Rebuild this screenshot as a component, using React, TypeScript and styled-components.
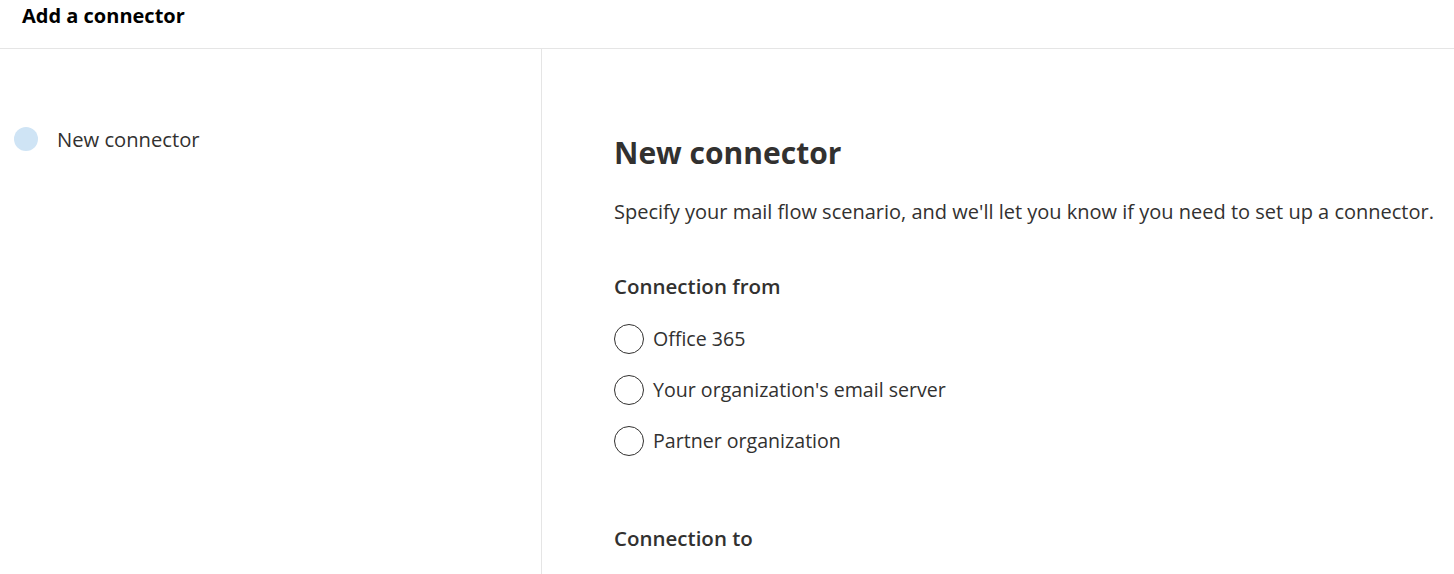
import React from 'react'
import styled, { createGlobalStyle } from 'styled-components'

const GlobalStyle = createGlobalStyle`
  html, body {
    margin: 0;
    padding: 0;
    background: #ffffff;
  }
  body {
    font-family: 'Open Sans', 'Noto Sans', 'Liberation Sans', sans-serif;
    color: #323130;
  }
`

const Page = styled.div`
  display: flex;
  flex-direction: column;
  height: 574px;
  overflow: hidden;
`

const Header = styled.header`
  height: 49px;
  box-sizing: border-box;
  border-bottom: 1px solid #e5e5e5;
  padding: 4px 0 0 22px;
`

const HeaderTitle = styled.h1`
  margin: 0;
  font-size: 20px;
  line-height: 24px;
  font-weight: 700;
  color: #000000;
`

const Body = styled.div`
  flex: 1;
  display: flex;
`

const Nav = styled.nav`
  width: 542px;
  box-sizing: border-box;
  border-right: 1px solid #e5e5e5;
  padding: 78px 0 0 14px;
`

const Step = styled.div`
  display: flex;
  align-items: center;
  gap: 19px;
`

const StepDot = styled.span<{ active?: boolean }>`
  width: 24px;
  height: 24px;
  border-radius: 50%;
  background: ${({ active }) => (active ? '#cfe4f5' : '#e5e5e5')};
`

const StepLabel = styled.span`
  font-size: 20.2px;
  line-height: 24px;
  color: #323130;
`

const Content = styled.main`
  flex: 1;
  padding: 84px 0 0 72px;
`

const Title = styled.h2`
  margin: 0;
  font-size: 30px;
  line-height: 40px;
  font-weight: 700;
  color: #323130;
`

const Description = styled.p`
  margin: 27px 0 0;
  font-size: 20px;
  line-height: 24px;
  color: #323130;
`

const SectionLabel = styled.h3<{ spacing: number }>`
  margin: ${({ spacing }) => spacing}px 0 0;
  font-size: 20.5px;
  line-height: 24px;
  font-weight: 600;
  color: #323130;
`

const RadioGroup = styled.div`
  display: flex;
  flex-direction: column;
  gap: 21px;
  margin-top: 26px;
`

const RadioRow = styled.label`
  display: flex;
  align-items: center;
  gap: 9px;
  cursor: pointer;
`

const RadioCircle = styled.span`
  width: 30px;
  height: 30px;
  box-sizing: border-box;
  border-radius: 50%;
  border: 1px solid #323130;
`

const RadioText = styled.span`
  font-size: 19.6px;
  line-height: 24px;
  color: #323130;
`

const fromOptions = ['Office 365', "Your organization's email server", 'Partner organization']

const App = () => {
  return (
    <>
      <GlobalStyle />
      <Page>
        <Header>
          <HeaderTitle>Add a connector</HeaderTitle>
        </Header>
        <Body>
          <Nav>
            <Step>
              <StepDot active />
              <StepLabel>New connector</StepLabel>
            </Step>
          </Nav>
          <Content>
            <Title>New connector</Title>
            <Description>
              Specify your mail flow scenario, and we'll let you know if you need to set up a connector.
            </Description>
            <SectionLabel spacing={50}>Connection from</SectionLabel>
            <RadioGroup>
              {fromOptions.map((opt) => (
                <RadioRow key={opt}>
                  <RadioCircle />
                  <RadioText>{opt}</RadioText>
                </RadioRow>
              ))}
            </RadioGroup>
            <SectionLabel spacing={70}>Connection to</SectionLabel>
          </Content>
        </Body>
      </Page>
    </>
  )
}

export default App
